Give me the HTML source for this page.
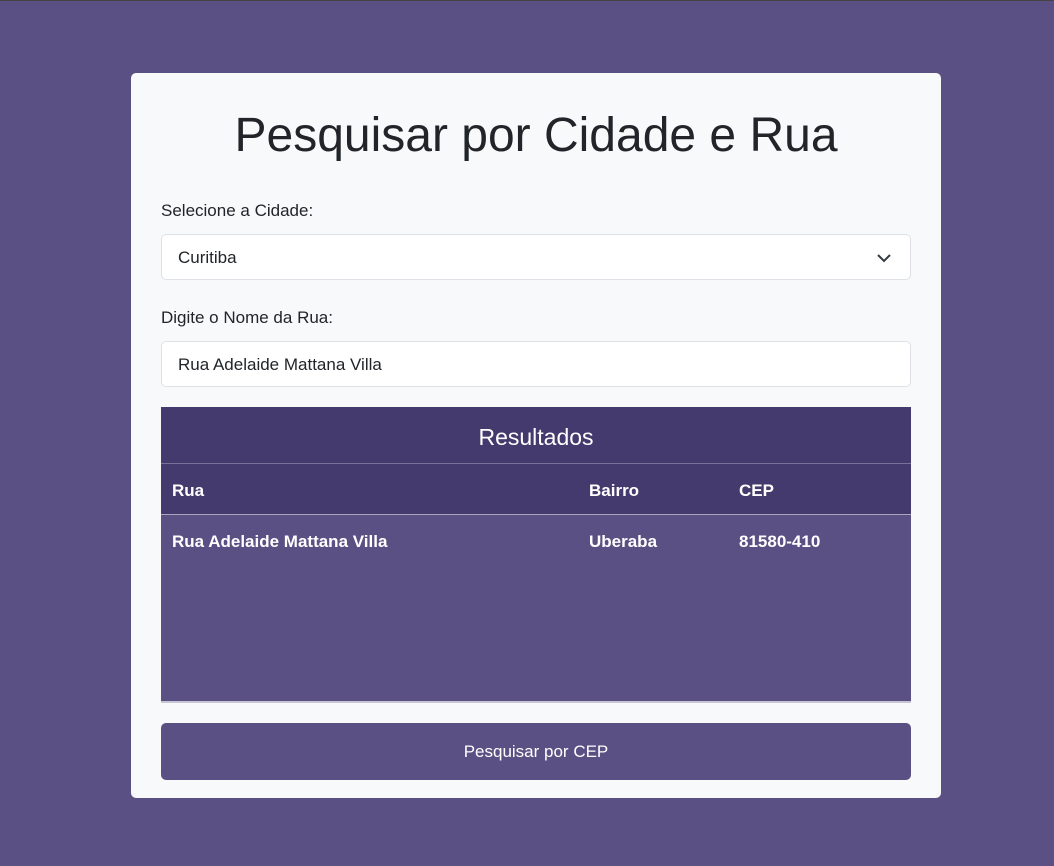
<!DOCTYPE html>
<html><head><meta charset="utf-8"><style>
*{box-sizing:border-box;margin:0;padding:0}
body{width:1054px;height:866px;background:#5b5083;font-family:"Liberation Sans",sans-serif;color:#212529;position:relative;overflow:hidden}
.top{position:absolute;left:0;top:0;width:1054px;height:1px;background:#444}
.card{position:absolute;left:131px;top:73px;width:810px;height:725px;background:#f8f9fa;border-radius:5px}
h1{position:absolute;left:0;right:0;top:35px;text-align:center;font-size:48px;font-weight:500;line-height:56px}
.lbl{position:absolute;left:30px;font-size:17px}
.box{position:absolute;left:30px;width:750px;height:46px;background:#fff;border:1px solid #dee2e6;border-radius:5px;font-size:17px;padding:0 16px;line-height:46px}
.tbl{position:absolute;left:30px;top:334px;width:750px;height:296px;background:#5b5083;border-bottom:2px solid #c9c6d4;color:#fff}
.cap{height:57px;background:#453a6d;text-align:center;font-size:23px;line-height:61px;border-bottom:1px solid #7a7199}
.hr{height:51px;background:#453a6d;border-bottom:1px solid #aaa5bf;position:relative;font-weight:bold;font-size:17px}
.row{position:relative;font-weight:bold;font-size:17px;height:50px}
.hr span,.row span{position:absolute;top:17px}
.btn{position:absolute;left:30px;top:650px;width:750px;height:57px;background:#5b5083;border-radius:5px;color:#fff;text-align:center;line-height:58px;font-size:17px}
</style></head><body>
<div class="top"></div>
<div class="card">
<h1>Pesquisar por Cidade e Rua</h1>
<div class="lbl" style="top:128px">Selecione a Cidade:</div>
<div class="box" style="top:161px">Curitiba<svg style="position:absolute;right:18px;top:17px" width="16" height="12" viewBox="0 0 16 12"><path d="M2 3l6 6 6-6" fill="none" stroke="#343a40" stroke-width="2"/></svg></div>
<div class="lbl" style="top:235px">Digite o Nome da Rua:</div>
<div class="box" style="top:268px">Rua Adelaide Mattana Villa</div>
<div class="tbl">
<div class="cap">Resultados</div>
<div class="hr"><span style="left:11px">Rua</span><span style="left:428px">Bairro</span><span style="left:578px">CEP</span></div>
<div class="row"><span style="left:11px">Rua Adelaide Mattana Villa</span><span style="left:428px">Uberaba</span><span style="left:578px">81580-410</span></div>
</div>
<div class="btn">Pesquisar por CEP</div>
</div>
</body></html>
